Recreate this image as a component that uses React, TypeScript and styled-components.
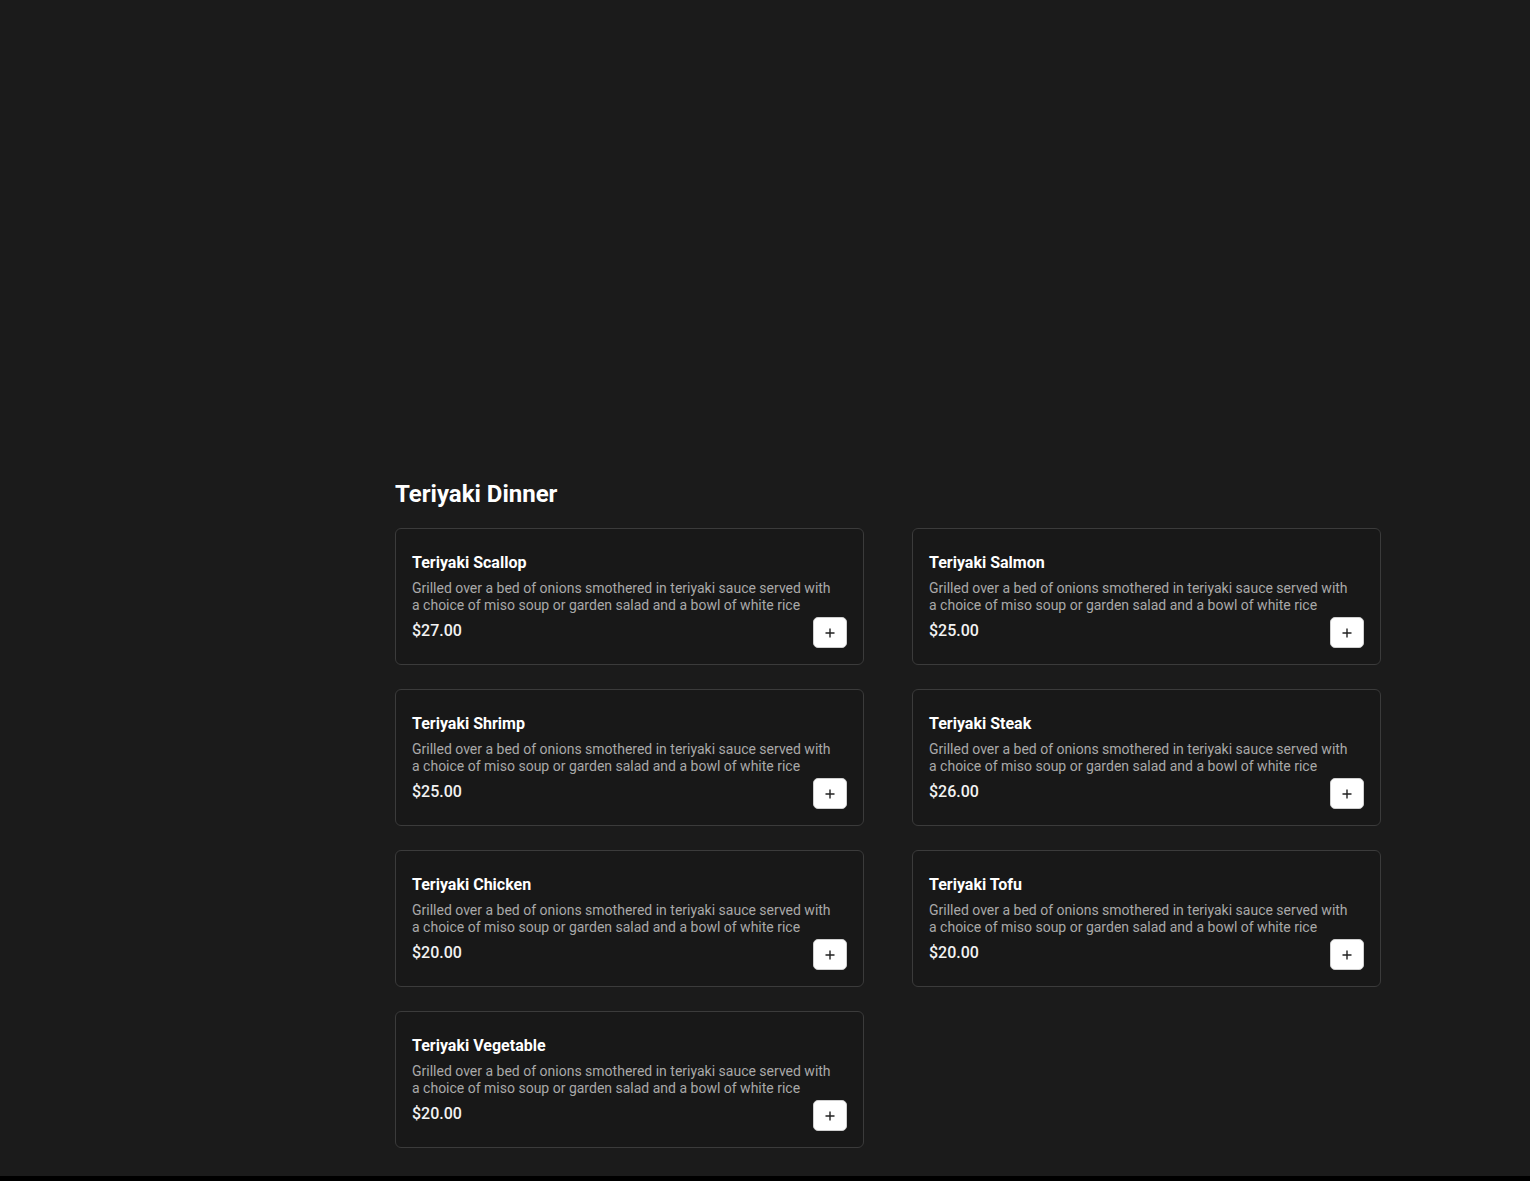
import React from "react";
import styled, { createGlobalStyle } from "styled-components";

const GlobalStyle = createGlobalStyle`
  html, body {
    margin: 0;
    padding: 0;
    background-color: #000000;
  }
  * {
    box-sizing: border-box;
  }
`;

const Page = styled.div`
  background-color: #1b1b1b;
  font-family: "Roboto", "Liberation Sans", sans-serif;
  padding: 0 149px 28px 395px;
`;

const Hero = styled.div`
  height: 478px;
`;

const SectionTitle = styled.h2`
  margin: 0 0 18px;
  font-size: 24px;
  line-height: 32px;
  font-weight: 700;
  color: #ffffff;
`;

const Grid = styled.div`
  display: grid;
  grid-template-columns: 469px 469px;
  column-gap: 48px;
  row-gap: 24px;
`;

const Card = styled.div`
  background-color: #181818;
  border: 1px solid #3b3b3b;
  border-radius: 6px;
  padding: 22px 16px 16px;
  display: flex;
  flex-direction: column;
`;

const ItemName = styled.h3`
  margin: 0;
  font-size: 16px;
  line-height: 24px;
  font-weight: 700;
  color: #ffffff;
`;

const Description = styled.p`
  margin: 5px 0 0;
  padding-right: 16px;
  font-size: 14px;
  line-height: 17px;
  color: #a9a9a9;
`;

const Footer = styled.div`
  margin-top: 3px;
  display: flex;
  justify-content: space-between;
  align-items: flex-start;
`;

const Price = styled.span`
  padding-top: 2px;
  font-size: 16px;
  line-height: 24px;
  font-weight: 500;
  color: #f2f2f2;
`;

const AddButton = styled.button`
  width: 34px;
  height: 31px;
  padding: 0;
  border: 1px solid #cfcfcf;
  border-radius: 5px;
  background-color: #ffffff;
  display: flex;
  align-items: center;
  justify-content: center;
  cursor: pointer;
`;

interface MenuItem {
  name: string;
  price: string;
}

const DESCRIPTION =
  "Grilled over a bed of onions smothered in teriyaki sauce served with a choice of miso soup or garden salad and a bowl of white rice";

const items: MenuItem[] = [
  { name: "Teriyaki Scallop", price: "$27.00" },
  { name: "Teriyaki Salmon", price: "$25.00" },
  { name: "Teriyaki Shrimp", price: "$25.00" },
  { name: "Teriyaki Steak", price: "$26.00" },
  { name: "Teriyaki Chicken", price: "$20.00" },
  { name: "Teriyaki Tofu", price: "$20.00" },
  { name: "Teriyaki Vegetable", price: "$20.00" },
];

const PlusIcon = () => (
  <svg width="12" height="12" viewBox="0 0 12 12" fill="none">
    <path d="M6 1.5v9M1.5 6h9" stroke="#222222" strokeWidth="1.4" />
  </svg>
);

const App = () => {
  return (
    <>
      <GlobalStyle />
      <Page>
        <Hero />
        <SectionTitle>Teriyaki Dinner</SectionTitle>
        <Grid>
          {items.map((item) => (
            <Card key={item.name}>
              <ItemName>{item.name}</ItemName>
              <Description>{DESCRIPTION}</Description>
              <Footer>
                <Price>{item.price}</Price>
                <AddButton aria-label={`Add ${item.name}`}>
                  <PlusIcon />
                </AddButton>
              </Footer>
            </Card>
          ))}
        </Grid>
      </Page>
    </>
  );
};

export default App;
